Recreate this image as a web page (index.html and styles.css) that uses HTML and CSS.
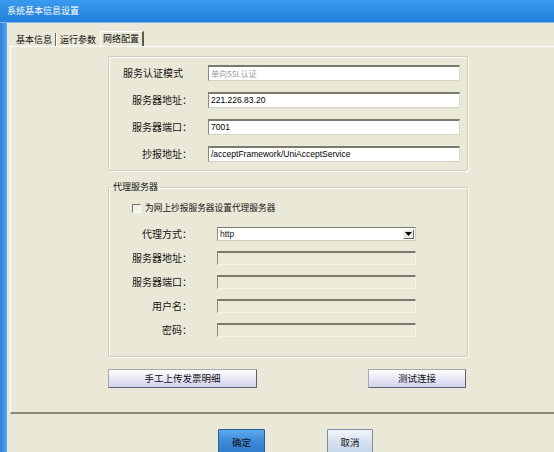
FILE: index.html
```html
<!DOCTYPE html>
<html lang="zh-CN">
<head>
<meta charset="utf-8">
<title>系统基本信息设置</title>
<link rel="stylesheet" href="styles.css">
</head>
<body>
<div class="titlebar"><span class="title">系统基本信息设置</span></div>
<div class="window-body">
  <div class="frame-left"></div>
  <div class="main">
    <div class="tabs">
      <div class="tab tab1">基本信息</div>
      <div class="tab tab2">运行参数</div>
      <div class="tab active">网络配置</div>
    </div>
    <div class="panel">
      <div class="group1">
        <div class="row"><span class="lbl lbl-mode">服务认证模式</span><div class="input muted">单向SSL认证</div></div>
        <div class="row"><span class="lbl">服务器地址：</span><div class="input">221.226.83.20</div></div>
        <div class="row"><span class="lbl">服务器端口：</span><div class="input">7001</div></div>
        <div class="row"><span class="lbl">抄报地址：</span><div class="input">/acceptFramework/UniAcceptService</div></div>
      </div>
      <fieldset class="group2">
        <legend>代理服务器</legend>
        <div class="check-row"><span class="checkbox"></span><span class="check-text">为网上抄报服务器设置代理服务器</span></div>
        <div class="row2 first"><span class="lbl2">代理方式：</span><div class="select"><span class="sel-text">http</span><span class="arrow"><svg width="7" height="4" viewBox="0 0 7 4"><path d="M0 0H7L3.5 4Z" fill="#000"/></svg></span></div></div>
        <div class="row2"><span class="lbl2">服务器地址：</span><div class="input2"></div></div>
        <div class="row2"><span class="lbl2">服务器端口：</span><div class="input2"></div></div>
        <div class="row2"><span class="lbl2">用户名：</span><div class="input2"></div></div>
        <div class="row2"><span class="lbl2">密码：</span><div class="input2"></div></div>
      </fieldset>
      <div class="btn-row">
        <button class="btn btn-upload">手工上传发票明细</button>
        <button class="btn btn-test">测试连接</button>
      </div>
    </div>
    <div class="footer">
      <button class="fbtn ok">确定</button>
      <button class="fbtn cancel">取消</button>
    </div>
  </div>
</div>
</body>
</html>
```
FILE: styles.css
```css
html, body {
  margin: 0;
  padding: 0;
}
body {
  width: 554px;
  height: 452px;
  overflow: hidden;
  background: #eae8d6;
  font-family: "Noto Sans CJK SC", "Liberation Sans", sans-serif;
  color: #151515;
}
.titlebar {
  height: 22px;
  background: linear-gradient(#3a9cf0, #2a88e2 60%, #2380dc);
  border-bottom: 1px solid #86b9ea;
  display: flex;
  align-items: center;
  padding-left: 7px;
}
.title {
  color: #fff;
  font-size: 9px;
  line-height: 12px;
}
.window-body {
  display: flex;
  height: 429px;
}
.frame-left {
  width: 7px;
  flex: none;
  background: linear-gradient(to right, #2b7fd6, #3f98ec 60%, #5aaaf0);
}
.main {
  flex: 1;
  min-width: 0;
  overflow: hidden;
}
.tabs {
  display: flex;
  align-items: flex-end;
  height: 23px;
  margin-left: 3px;
}
.tab {
  font-size: 9px;
  line-height: 13px;
  height: 13px;
  color: #111;
  white-space: nowrap;
}
.tab1 {
  padding: 0 3px 0 6px;
  border-right: 1px solid #6e6c60;
  box-shadow: 1px 0 0 #fff;
}
.tab2 {
  padding: 0 4px 0 4px;
}
.tab.active {
  height: 14px;
  line-height: 14px;
  padding: 0 3px 0 2px;
  border-left: 1px solid #fff;
  border-top: 1px solid #fff;
  border-right: 2px solid #5c5a50;
}
.panel {
  margin-left: 3px;
  margin-right: -20px;
  border-left: 1px solid #fff;
  border-top: 1px solid #fff;
  border-bottom: 2px solid #8c8a7a;
  padding: 9px 0 24px 97px;
}
.group1 {
  width: 360px;
  height: 115px;
  box-sizing: border-box;
  border: 1px solid #cfccb8;
  border-radius: 2px;
  box-shadow: 1px 1px 0 #fff, inset 1px 1px 0 #fff;
  padding-top: 8px;
  display: flex;
  flex-direction: column;
  gap: 11px;
}
.row {
  display: flex;
  align-items: center;
  height: 16px;
}
.lbl {
  width: 83px;
  flex: none;
  box-sizing: border-box;
  text-align: right;
  font-size: 10px;
  line-height: 14px;
  margin-right: 16px;
  white-space: nowrap;
}
.lbl-mode {
  padding-right: 9px;
}
.input {
  width: 252px;
  height: 16px;
  box-sizing: border-box;
  background: #fff;
  border-top: 2px solid #7b7a6e;
  border-left: 1px solid #8c8a7e;
  border-right: 1px solid #dcdacb;
  border-bottom: 1px solid #d4d2c2;
  font-family: "Liberation Sans", sans-serif;
  font-size: 8.5px;
  line-height: 13px;
  padding-left: 2px;
  color: #000;
  white-space: nowrap;
}
.input.muted {
  color: #9a9a9a;
  font-family: "Noto Sans CJK SC", "Liberation Sans", sans-serif;
  font-size: 8px;
}
.group2 {
  margin: 11px 0 0 0;
  width: 360px;
  min-inline-size: 0;
  box-sizing: border-box;
  border: 1px solid #cfccb8;
  border-radius: 2px;
  box-shadow: 1px 1px 0 #fff, inset 1px 1px 0 #fff;
  padding: 0 0 19px 0;
}
.group2 legend {
  font-size: 9px;
  line-height: 10px;
  padding: 0 2px;
  margin-left: 2px;
  color: #111;
}
.check-row {
  display: flex;
  align-items: center;
  height: 12px;
  margin-top: 10px;
  padding-left: 23px;
}
.checkbox {
  width: 9px;
  height: 9px;
  box-sizing: border-box;
  border-top: 1px solid #77766a;
  border-left: 1px solid #77766a;
  border-right: 1px solid #fff;
  border-bottom: 1px solid #fff;
  background: #f2f1e8;
}
.check-text {
  margin-left: 4px;
  font-size: 8.7px;
  line-height: 12px;
  white-space: nowrap;
}
.row2 {
  display: flex;
  align-items: center;
  height: 14px;
  margin-top: 10px;
}
.row2.first {
  margin-top: 13px;
}
.lbl2 {
  width: 83px;
  flex: none;
  text-align: right;
  font-size: 10px;
  line-height: 14px;
  margin-right: 25px;
  white-space: nowrap;
}
.select {
  width: 199px;
  height: 14px;
  box-sizing: border-box;
  background: #fff;
  border-top: 1px solid #7b7a6e;
  border-left: 1px solid #8c8a7e;
  border-right: 1px solid #d0cec0;
  border-bottom: 1px solid #d0cec0;
  display: flex;
  align-items: center;
  justify-content: space-between;
}
.sel-text {
  font-family: "Liberation Sans", sans-serif;
  font-size: 8.5px;
  padding-left: 2px;
}
.arrow {
  width: 11px;
  height: 10px;
  box-sizing: border-box;
  margin-right: 1px;
  background: #ebe9dc;
  border-top: 1px solid #fff;
  border-left: 1px solid #fff;
  border-right: 1px solid #6a685e;
  border-bottom: 1px solid #6a685e;
  display: flex;
  align-items: center;
  justify-content: center;
}
.input2 {
  width: 199px;
  height: 14px;
  box-sizing: border-box;
  background: #ebe9d8;
  border-top: 2px solid #7d7b6e;
  border-left: 1px solid #8a887c;
  border-right: 1px solid #f6f5ec;
  border-bottom: 1px solid #f6f5ec;
}
.btn-row {
  margin-top: 12px;
  width: 358px;
  display: flex;
  justify-content: space-between;
}
.btn {
  height: 19px;
  font-family: "Noto Sans CJK SC", "Liberation Sans", sans-serif;
  font-size: 9.5px;
  line-height: 15px;
  color: #111;
  padding: 0;
  background: linear-gradient(#ffffff, #eeeefa 35%, #d3d3ef);
  border: 1px solid;
  border-color: #a8a8b4 #5e5e6c #5e5e6c #a8a8b4;
  border-radius: 1px;
}
.btn-upload {
  width: 149px;
}
.btn-test {
  width: 98px;
}
.footer {
  display: flex;
  gap: 62px;
  padding-left: 211px;
  margin-top: 15px;
}
.fbtn {
  height: 25px;
  font-family: "Noto Sans CJK SC", "Liberation Sans", sans-serif;
  font-size: 9.5px;
  color: #111;
  padding: 0;
  border-radius: 1px;
}
.ok {
  width: 47px;
  background: linear-gradient(#5daaee, #3a8ad8 50%, #2f7ccc);
  border: 1px solid #2d5f96;
}
.cancel {
  width: 46px;
  background: linear-gradient(#f2f6fb, #d6e2ef 50%, #c6d6ea);
  border: 1px solid #7d8ea6;
}
```
